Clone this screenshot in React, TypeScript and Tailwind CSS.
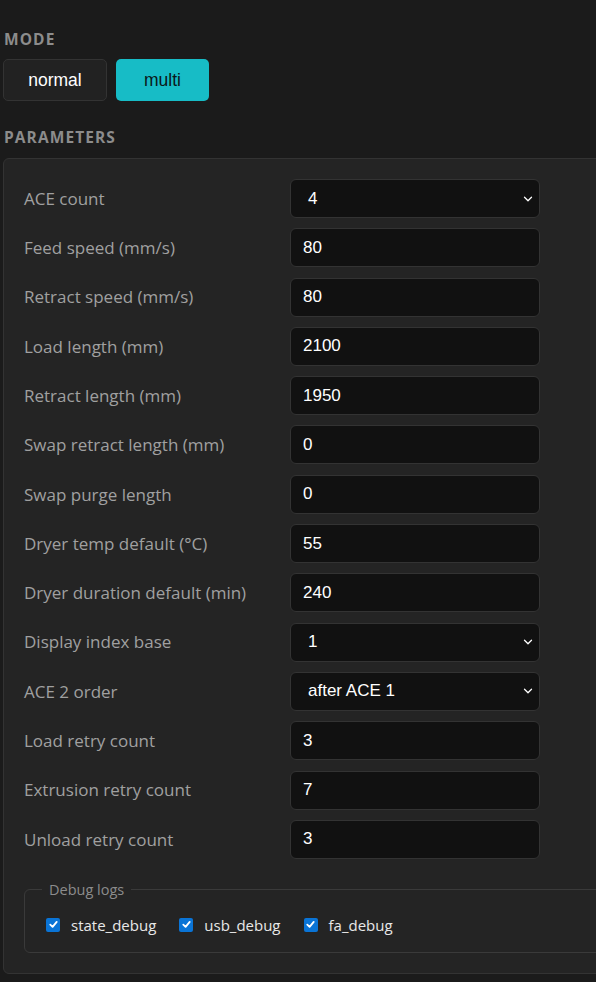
import React from 'react';
import { ChevronDown } from 'lucide-react';

type Row = { label: string; value: string; select?: boolean };

const rows: Row[] = [
  { label: 'ACE count', value: '4', select: true },
  { label: 'Feed speed (mm/s)', value: '80' },
  { label: 'Retract speed (mm/s)', value: '80' },
  { label: 'Load length (mm)', value: '2100' },
  { label: 'Retract length (mm)', value: '1950' },
  { label: 'Swap retract length (mm)', value: '0' },
  { label: 'Swap purge length', value: '0' },
  { label: 'Dryer temp default (°C)', value: '55' },
  { label: 'Dryer duration default (min)', value: '240' },
  { label: 'Display index base', value: '1', select: true },
  { label: 'ACE 2 order', value: 'after ACE 1', select: true },
  { label: 'Load retry count', value: '3' },
  { label: 'Extrusion retry count', value: '7' },
  { label: 'Unload retry count', value: '3' },
];

const debugFlags = ['state_debug', 'usb_debug', 'fa_debug'];

const sans = "font-['Open_Sans',sans-serif]";
const arial = "font-['Liberation_Sans',Arial,sans-serif]";

const App = () => {
  return (
    <div className="min-h-screen w-[596px] overflow-hidden bg-[#1b1b1b] pt-[29px]">
      <h2 className={`${sans} px-1 text-[15.5px] font-bold uppercase leading-[20px] tracking-[0.07em] text-[#8c8c8c]`}>
        Mode
      </h2>
      <div className="mt-[10px] flex gap-[9px] pl-[3px]">
        <button className={`${arial} h-[42px] w-[104px] rounded-[5px] border border-[#333] bg-[#222] text-[17.5px] text-white`}>
          normal
        </button>
        <button className={`${arial} h-[42px] w-[93px] rounded-[5px] bg-[#17bcc6] text-[17.5px] text-[#0b1719]`}>
          multi
        </button>
      </div>

      <h2 className={`${sans} mt-[26px] px-1 text-[15.5px] font-bold uppercase leading-[20px] tracking-[0.07em] text-[#8c8c8c]`}>
        Parameters
      </h2>

      <div className="ml-[3px] mt-[11px] w-[640px] rounded-[6px] border border-[#333] bg-[#242424] px-5 pb-5 pt-5">
        <div className="flex flex-col gap-[10.3px]">
          {rows.map((row) => (
            <div key={row.label} className="flex items-center">
              <label className={`${sans} w-[266px] text-[17px] text-[#a0a0a0]`}>{row.label}</label>
              {row.select ? (
                <div className="relative h-[39px] w-[250px] rounded-[6px] border border-[#333] bg-[#111]">
                  <span className={`${arial} absolute left-[17px] top-1/2 -translate-y-1/2 text-[17px] text-white`}>
                    {row.value}
                  </span>
                  <ChevronDown className="absolute right-[4px] top-1/2 h-[14px] w-[14px] -translate-y-1/2 text-white" strokeWidth={2.2} />
                </div>
              ) : (
                <input
                  readOnly
                  value={row.value}
                  className={`${arial} h-[39px] w-[250px] rounded-[6px] border border-[#333] bg-[#111] px-3 text-[17px] text-white outline-none`}
                />
              )}
            </div>
          ))}
        </div>

        <fieldset className="mt-[20px] rounded-[6px] border border-[#3a3a3a] px-[21px] pb-[16px] pt-[13px]">
          <legend className={`${sans} -ml-[4px] px-[7px] text-[14.5px] text-[#8c8c8c]`}>Debug logs</legend>
          <div className="flex items-center gap-[23px]">
            {debugFlags.map((flag) => (
              <label key={flag} className={`${sans} flex items-center gap-[11px] text-[15px] text-[#e8e8e8]`}>
                <span className="flex h-[14px] w-[14px] items-center justify-center rounded-[2px] bg-[#0a74d6]">
                  <svg viewBox="0 0 12 12" className="h-[11px] w-[11px]">
                    <path d="M2.5 6.2 L5 8.6 L9.5 3.2" fill="none" stroke="white" strokeWidth="2" strokeLinecap="round" strokeLinejoin="round" />
                  </svg>
                </span>
                {flag}
              </label>
            ))}
          </div>
        </fieldset>
      </div>
    </div>
  );
};

export default App;
